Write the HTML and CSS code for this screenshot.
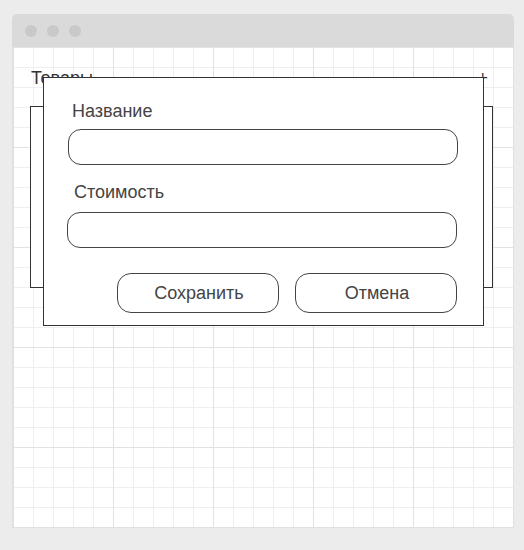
FILE: index.html
```html
<!DOCTYPE html>
<html lang="ru">
<head>
<meta charset="utf-8">
<title>Товары</title>
<link rel="stylesheet" href="styles.css">
</head>
<body>
<div class="window">
  <div class="titlebar">
    <span class="dot"></span>
    <span class="dot"></span>
    <span class="dot"></span>
  </div>
  <div class="canvas">
    <div class="page-header">
      <span class="page-title">Товары</span>
      <span class="page-add">+</span>
    </div>
    <div class="card"></div>

    <div class="modal">
      <label class="field-label field-label--first">Название</label>
      <div class="input input--first"></div>
      <label class="field-label field-label--second">Стоимость</label>
      <div class="input input--second"></div>
      <div class="actions">
        <button class="btn">Сохранить</button>
        <button class="btn">Отмена</button>
      </div>
    </div>
  </div>
</div>
</body>
</html>
```

FILE: styles.css
```css
* {
  box-sizing: border-box;
}

html, body {
  margin: 0;
  padding: 0;
}

body {
  background: #ececec;
  font-family: "Liberation Sans", Arial, sans-serif;
  width: 524px;
  height: 550px;
  overflow: hidden;
}

.window {
  margin: 14px 0 0 12px;
  width: 502px;
}

.titlebar {
  height: 33px;
  background: #dadada;
  border-radius: 5px 5px 0 0;
  display: flex;
  align-items: center;
  gap: 10px;
  padding-left: 13px;
}

.dot {
  width: 12px;
  height: 12px;
  border-radius: 50%;
  background: #c9c9c9;
}

.canvas {
  position: relative;
  height: 481px;
  border: 1px solid #e0e0e0;
  border-top: 0;
  background-color: #ffffff;
  background-image:
    linear-gradient(to right, transparent 99px, #e2e2e2 99px, #e2e2e2 100px),
    linear-gradient(to bottom, transparent 99px, #e2e2e2 99px, #e2e2e2 100px),
    linear-gradient(to right, transparent 19px, #efefef 19px, #efefef 20px),
    linear-gradient(to bottom, transparent 19px, #efefef 19px, #efefef 20px);
  background-size: 100px 100px, 100px 100px, 20px 20px, 20px 20px;
  background-position: 1px 1px, 1px 1px, 1px 1px, 1px 1px;
  padding: 21px 20px 0 17px;
}

.page-header {
  display: flex;
  justify-content: space-between;
  align-items: baseline;
  font-size: 18px;
  line-height: 21px;
  color: #333;
  padding: 0 5px 0 1px;
}

.card {
  margin-top: 17px;
  height: 182px;
  border: 1px solid #333;
  background: #fff;
}

.modal {
  position: absolute;
  left: 30px;
  top: 30px;
  width: 441px;
  background: #fff;
  border: 1px solid #333;
  padding: 23px 26px 12px 24px;
  display: flex;
  flex-direction: column;
  align-items: flex-start;
}

.field-label {
  font-size: 18px;
  line-height: 21px;
  color: #444;
}

.field-label--first {
  margin-left: 4px;
}

.field-label--second {
  margin-top: 17px;
  margin-left: 6px;
}

.input {
  width: 390px;
  height: 36px;
  border: 1px solid #444;
  border-radius: 13px;
  background: #fff;
}

.input--first {
  margin-top: 7px;
}

.input--second {
  margin-top: 9px;
  margin-left: -1px;
}

.actions {
  align-self: stretch;
  margin-top: 25px;
  display: flex;
  justify-content: flex-end;
  gap: 16px;
}

.btn {
  width: 162px;
  height: 40px;
  border: 1px solid #444;
  border-radius: 14px;
  background: #fff;
  font-family: "Liberation Sans", Arial, sans-serif;
  font-size: 18px;
  color: #444;
  padding: 0 0 0 2px;
}
```
